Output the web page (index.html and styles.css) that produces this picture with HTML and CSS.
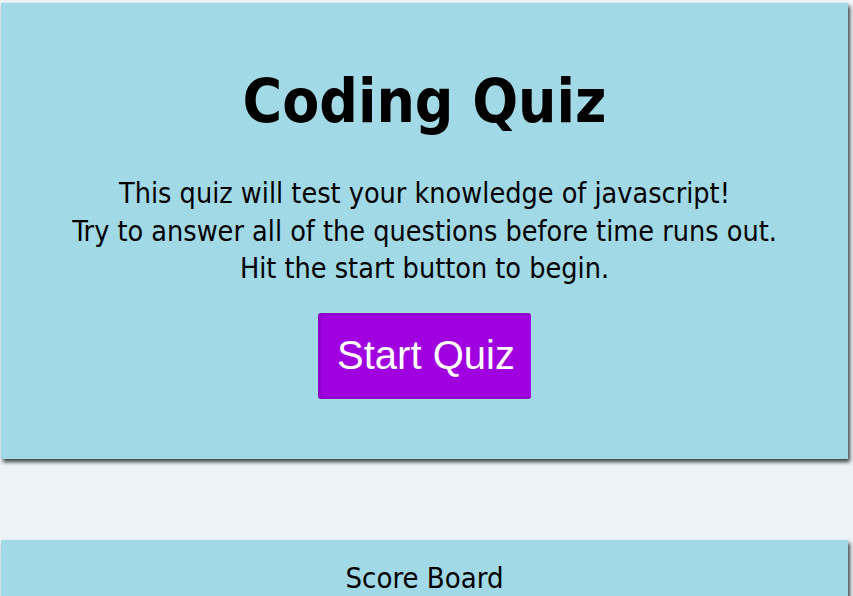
FILE: index.html
```html
<!DOCTYPE html>
<html lang="en">
<head>
<meta charset="utf-8">
<title>Coding Quiz</title>
<link rel="stylesheet" href="styles.css">
</head>
<body>
<main class="page">
  <section class="card intro">
    <h1 class="title">Coding Quiz</h1>
    <p class="lead">This quiz will test your knowledge of javascript!<br>Try to answer all of the questions before time runs out.<br>Hit the start button to begin.</p>
    <button class="start" type="button">Start Quiz</button>
  </section>
  <section class="card scores">
    <h2 class="scores-title">Score Board</h2>
  </section>
</main>
</body>
</html>
```
FILE: styles.css
```css
html, body {
  margin: 0;
  padding: 0;
  background: #edf4f8;
  overflow: hidden;
}
.page {
  display: flex;
  flex-direction: column;
  gap: 81px;
  padding: 3px 5px 0 1px;
  font-family: "DejaVu Sans Condensed", "DejaVu Sans", sans-serif;
  color: #000;
}
.card {
  background: #a1d9e6;
  box-shadow: 2px 3px 4px rgba(0, 0, 0, 0.75);
  text-align: center;
}
.intro {
  height: 456px;
  box-sizing: border-box;
  padding-top: 68px;
}
.title {
  margin: 0;
  font-size: 60px;
  font-weight: bold;
  line-height: 60px;
}
.lead {
  margin: 44px 0 0;
  font-size: 28.5px;
  line-height: 37.5px;
}
.start {
  margin-top: 25px;
  width: 213px;
  height: 86px;
  background: #a000e0;
  color: #fff;
  border: none;
  border-left: 3px solid #8a00c4;
  border-top: 2px solid #8a00c4;
  border-bottom: 2px solid #8a00c4;
  border-radius: 3px;
  font-family: "Liberation Sans", Arial, sans-serif;
  font-size: 40px;
  padding: 0;
}
.scores {
  height: 80px;
  padding-top: 22px;
  box-sizing: border-box;
}
.scores-title {
  margin: 0;
  font-size: 29px;
  font-weight: normal;
  line-height: 32px;
}
```
